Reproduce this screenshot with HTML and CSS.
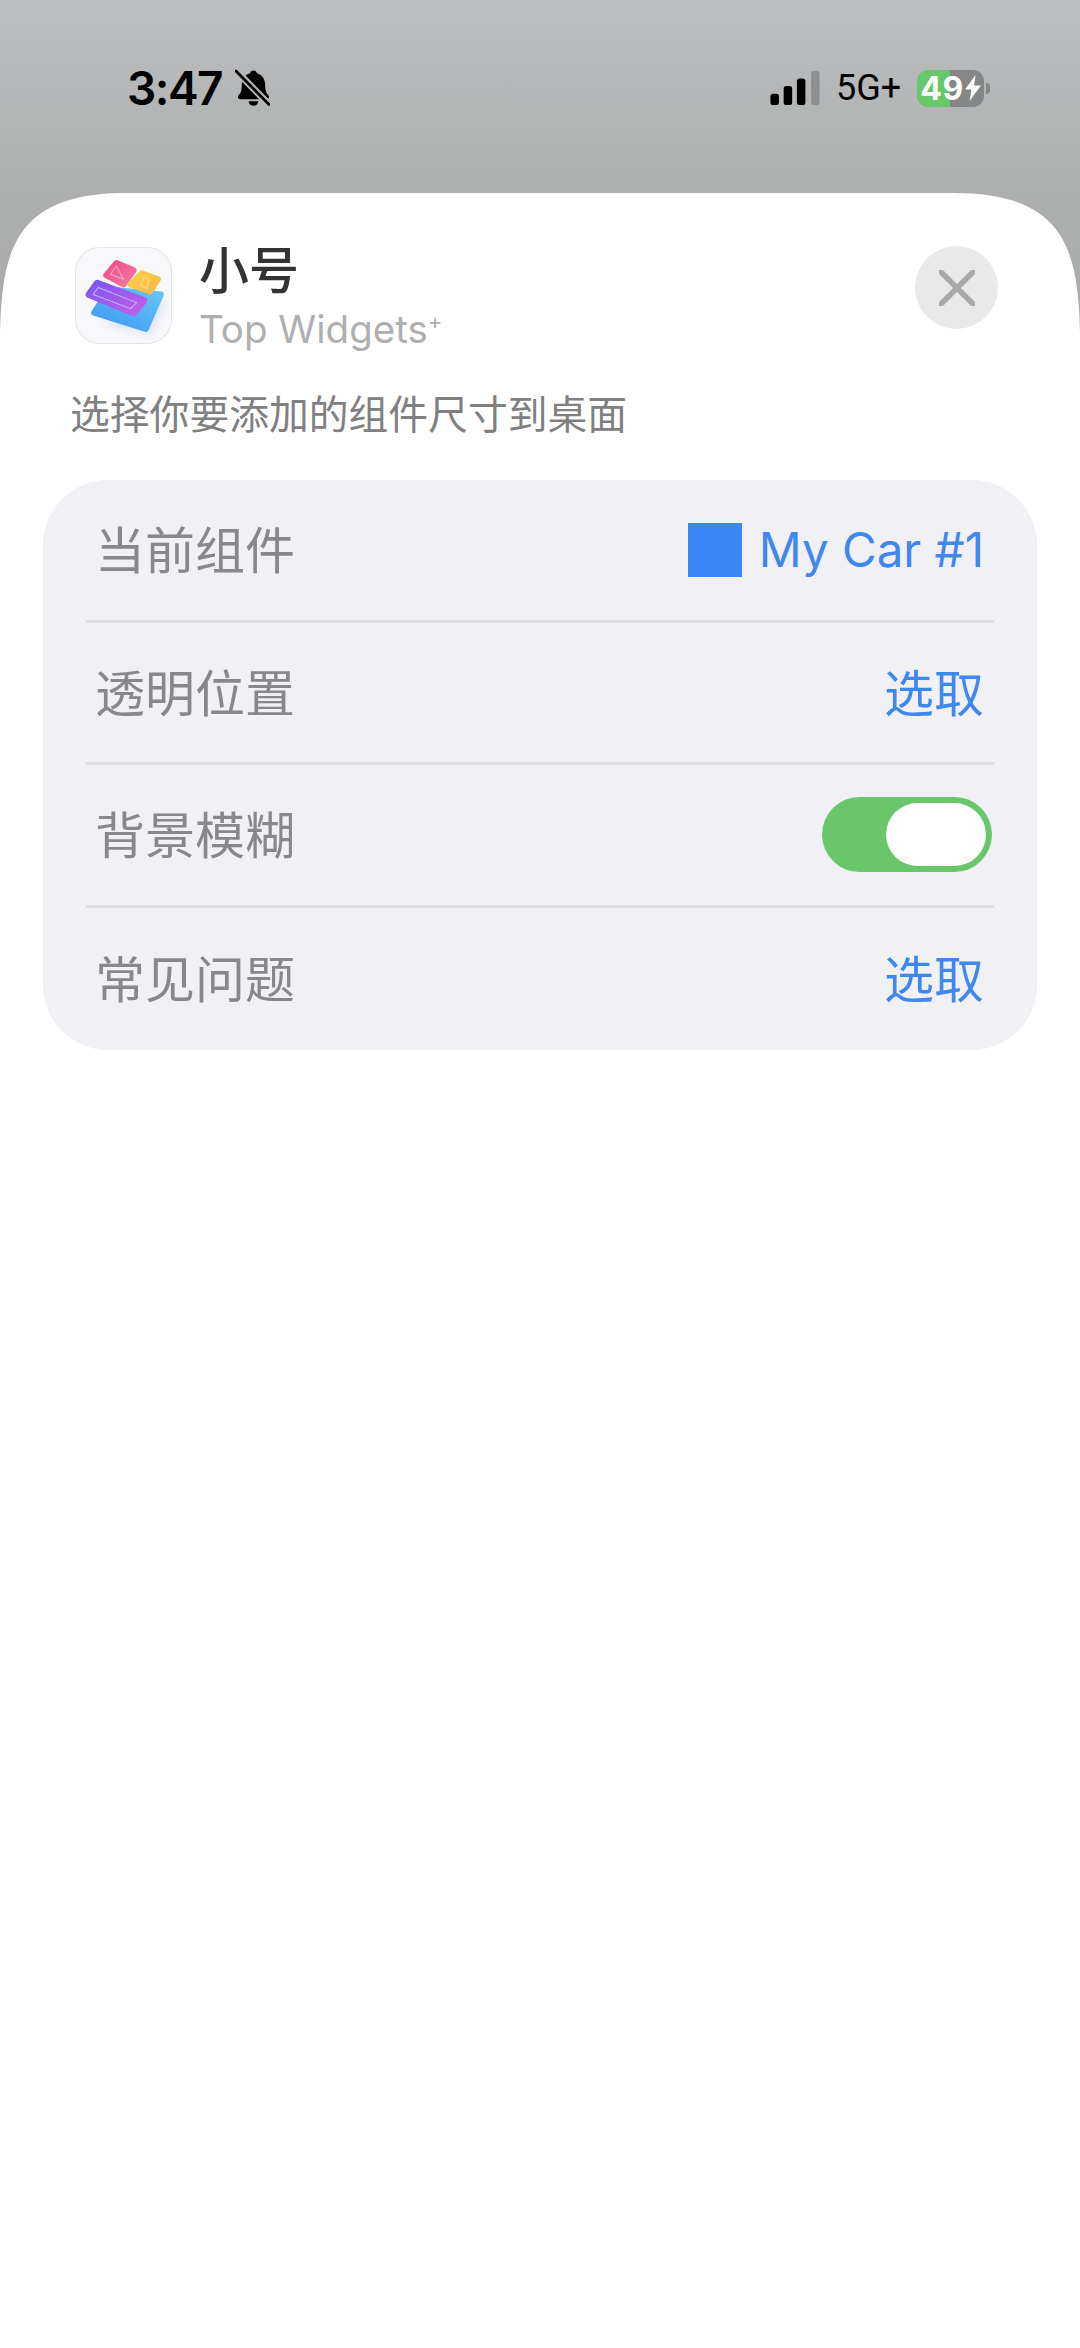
FILE: index.html
```html
<!DOCTYPE html>
<html lang="zh-CN">
<head>
    <meta charset="UTF-8">
    <meta name="viewport" content="width=device-width, initial-scale=1.0">
    <title>Top Widgets</title>
    <link rel="stylesheet" href="styles.css">
</head>
<body>
    <div class="screen">
        <div class="status-bar">
            <div class="status-left">
                <span class="time">3:47</span>
                <svg class="bell" viewBox="0 0 36 38">
                    <path d="M19 1c2 0 3.200 1.200 3.500 2.800 5.500 1.500 8.500 6 8.500 12 0 5 .8 8 3 10.200 1.500 1.500 1.500 4.500-1.500 4.500H5.500c-3 0-3-3-1.500-4.500C6.200 23.800 7 20.800 7 15.800c0-6 3-10.500 8.500-12 .3-1.600 1.500-2.800 3.500-2.800z" fill="#000"/>
                    <path d="M14 32.500h10c-.5 3-2.500 4.800-5 4.800s-4.500-1.800-5-4.800z" fill="#000"/>
                    <path d="M0 0l36 37" stroke="#b6b7b8" stroke-width="7"/>
                    <path d="M1 1.500l34 34.500" stroke="#000" stroke-width="2.800" stroke-linecap="round"/>
                </svg>
            </div>
            <div class="status-right">
                <svg class="signal" viewBox="0 0 52 36">
                    <rect x="0" y="24" width="9" height="12" rx="3" fill="#000"/>
                    <rect x="14" y="16" width="9" height="20" rx="3" fill="#000"/>
                    <rect x="28" y="8" width="9" height="28" rx="3" fill="#000"/>
                    <rect x="43" y="0" width="9" height="36" rx="3" fill="#8e8f90"/>
                </svg>
                <span class="network">5G+</span>
                <div class="battery">
                    <span class="battery-level">49</span>
                    <svg class="bolt" viewBox="0 0 16 26">
                        <path d="M10.500 0L0 14.500h6.500L4.500 26 16 10.500H9z" fill="#fff"/>
                    </svg>
                </div>
                <div class="battery-nub"></div>
            </div>
        </div>

        <div class="sheet">
            <div class="sheet-header">
                <svg class="app-icon" viewBox="0 0 96 96">
                    <defs>
                        <linearGradient id="blueTile" x1="0" y1="1" x2="1" y2="0">
                            <stop offset="0" stop-color="#3d97f5"/>
                            <stop offset="1" stop-color="#66c6f5"/>
                        </linearGradient>
                        <linearGradient id="purpleTile" x1="0" y1="0" x2="1" y2="1">
                            <stop offset="0" stop-color="#7c55f2"/>
                            <stop offset="1" stop-color="#c45fe8"/>
                        </linearGradient>
                        <linearGradient id="pinkTile" x1="0" y1="0" x2="1" y2="1">
                            <stop offset="0" stop-color="#ee4f88"/>
                            <stop offset="1" stop-color="#f277a6"/>
                        </linearGradient>
                        <linearGradient id="yellowTile" x1="0" y1="0" x2="1" y2="1">
                            <stop offset="0" stop-color="#fbd044"/>
                            <stop offset="1" stop-color="#f9b84c"/>
                        </linearGradient>
                        <filter id="softShadow">
                            <feGaussianBlur stdDeviation="4"/>
                        </filter>
                    </defs>
                    <rect x="0.500" y="0.500" width="95" height="95" rx="24" fill="#f8f8fb" stroke="#e4e4e8"/>
                    <polygon points="90,52 76,88 30,76 40,60" fill="#c9d6ea" opacity="0.6" filter="url(#softShadow)"/>
                    <polygon points="85,47 70,81 19,65 34,42" fill="url(#blueTile)" stroke="url(#blueTile)" stroke-width="6" stroke-linejoin="round"/>
                    <polygon points="41,16 58,23 48,37 31,28" fill="url(#pinkTile)" stroke="url(#pinkTile)" stroke-width="6" stroke-linejoin="round"/>
                    <polygon points="66,26 82,32 74,44 55,37" fill="url(#yellowTile)" stroke="url(#yellowTile)" stroke-width="6" stroke-linejoin="round"/>
                    <polygon points="22,36 68,53 58,65 14,47" fill="url(#purpleTile)" stroke="url(#purpleTile)" stroke-width="7" stroke-linejoin="round"/>
                    <path d="M41 19l7 13-13-5z" fill="none" stroke="#f9a6c4" stroke-width="1"/>
                    <path d="M68 30l5 2-2 9-6-3z" fill="none" stroke="#f7dd8a" stroke-width="1"/>
                    <path d="M23 40l38 15-6 6-37-14z" fill="none" stroke="#c8b4f8" stroke-width="1"/>
                </svg>
                <div class="app-text">
                    <div class="app-size">小号</div>
                    <div class="app-name">Top Widgets<sup>+</sup></div>
                </div>
                <div class="close-btn">
                    <svg viewBox="0 0 36 36">
                        <path d="M2 2l32 32M34 2L2 34" stroke="#a8a8a8" stroke-width="5.500" stroke-linecap="round"/>
                    </svg>
                </div>
            </div>

            <p class="hint">选择你要添加的组件尺寸到桌面</p>

            <div class="settings">
                <div class="row">
                    <span class="row-label">当前组件</span>
                    <span class="row-value">
                        <span class="swatch"></span>
                        <span class="latin">My Car #1</span>
                    </span>
                </div>
                <div class="row">
                    <span class="row-label">透明位置</span>
                    <span class="row-value pick">选取</span>
                </div>
                <div class="row">
                    <span class="row-label">背景模糊</span>
                    <div class="toggle"><div class="toggle-thumb"></div></div>
                </div>
                <div class="row">
                    <span class="row-label">常见问题</span>
                    <span class="row-value pick">选取</span>
                </div>
            </div>
        </div>
    </div>
</body>
</html>
```

FILE: styles.css
```css
body {
    margin: 0;
    font-family: Inter, "Noto Sans CJK SC", sans-serif;
    color: #000;
}
.screen {
    width: 1080px;
    height: 2348px;
    overflow: hidden;
    display: flex;
    flex-direction: column;
    background: linear-gradient(#bdbec0 0, #adaeae 193px, #a9abaa 340px, #a9abaa 100%);
}
.status-bar {
    height: 193px;
    flex: none;
    display: flex;
    justify-content: space-between;
    align-items: flex-start;
    padding: 67px 90px 0 127px;
    box-sizing: border-box;
}
.status-left {
    display: flex;
    align-items: center;
    gap: 13px;
}
.time {
    font-size: 46px;
    font-weight: 600;
    line-height: 42px;
    letter-spacing: -1.5px;
}
.bell {
    width: 35px;
    height: 38px;
}
.status-right {
    display: flex;
    align-items: center;
    height: 40px;
    margin-top: 1px;
}
.signal {
    width: 52px;
    height: 34px;
    margin-right: 15px;
}
.network {
    font-family: Roboto, sans-serif;
    font-size: 36px;
    width: 62px;
    white-space: nowrap;
    margin-right: 19px;
}
.battery {
    width: 67px;
    height: 37px;
    border-radius: 11px;
    background: linear-gradient(90deg, #67c76a 0, #67c76a 50%, #858687 50%, #858687 100%);
    display: flex;
    align-items: center;
    justify-content: center;
    gap: 1px;
    color: #fff;
}
.battery-level {
    font-size: 32px;
    font-weight: 700;
    line-height: 37px;
    letter-spacing: 0.5px;
}
.bolt {
    width: 16px;
    height: 26px;
}
.battery-nub {
    width: 4px;
    height: 11px;
    margin-left: 2px;
    background: #858687;
    border-radius: 0 6px 6px 0;
}
.sheet {
    flex: 1;
    background: #fff;
    clip-path: path("M0 140C2 57 15 0 127 0H953C1065 0 1078 57 1080 140V2155H0Z");
    display: flex;
    flex-direction: column;
}
.sheet-header {
    display: flex;
    align-items: flex-start;
    padding: 54px 82px 0 75px;
}
.app-icon {
    width: 97px;
    height: 97px;
    flex: none;
}
.app-text {
    flex: 1;
    margin: -3px 0 0 27px;
}
.app-size {
    font-size: 50px;
    font-weight: 500;
    line-height: 54px;
    color: #333;
}
.app-name {
    font-size: 38.500px;
    line-height: 40px;
    margin-top: 11px;
    color: #afafaf;
}
.app-name sup {
    font-size: 22px;
    line-height: 0;
}
.close-btn {
    width: 83px;
    height: 83px;
    margin-top: -1px;
    border-radius: 50%;
    background: #e9e9e9;
    display: flex;
    align-items: center;
    justify-content: center;
}
.close-btn svg {
    width: 36px;
    height: 36px;
}
.hint {
    margin: 38px 0 0 70px;
    font-size: 39.800px;
    line-height: 56px;
    color: #808080;
}
.settings {
    margin: 37px 43px 0;
    background: #f0f0f5;
    border-radius: 65px;
    padding: 0 43px;
}
.row {
    height: 142.500px;
    display: flex;
    align-items: center;
    justify-content: space-between;
    border-bottom: 3px solid #dedee3;
    box-sizing: border-box;
}
.row:last-child {
    border-bottom: none;
}
.row-label {
    font-size: 50px;
    color: #87878c;
    margin-left: 9px;
    padding-bottom: 5px;
}
.row-value {
    display: flex;
    align-items: center;
    font-size: 50px;
    color: #3f88ee;
    margin-right: 10px;
}
.pick {
    padding-bottom: 5px;
}
.swatch {
    width: 54px;
    height: 54px;
    background: #3b86f8;
    margin-right: 17px;
}
.latin {
    font-size: 47.500px;
}
.toggle {
    width: 170px;
    height: 75px;
    margin-right: 2px;
    border-radius: 38px;
    background: #67c76a;
    display: flex;
    justify-content: flex-end;
    align-items: center;
    padding-right: 6px;
    box-sizing: border-box;
}
.toggle-thumb {
    width: 100px;
    height: 63px;
    border-radius: 32px;
    background: #fff;
}
```
